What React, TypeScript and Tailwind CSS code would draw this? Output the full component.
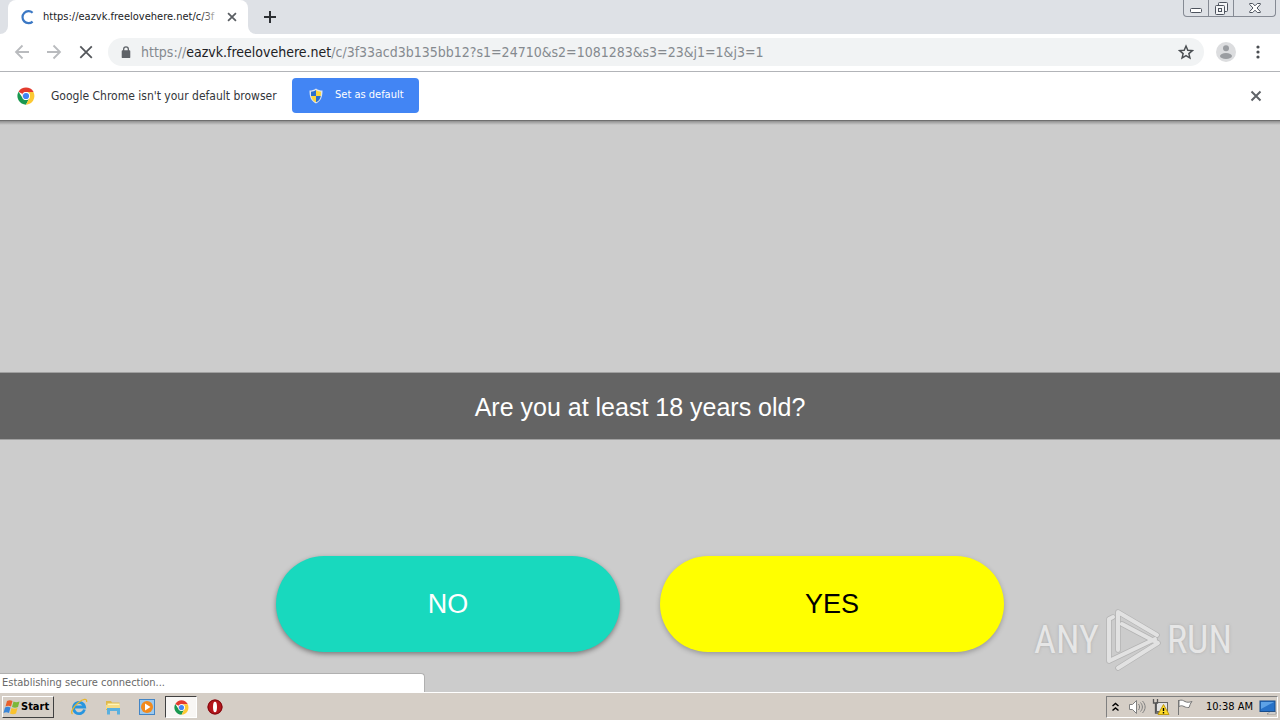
import type { ReactNode } from "react";

function ChromeLogo({ className }: { className: string }) {
  return (
    <svg className={className} viewBox="0 0 48 48" aria-hidden="true">
      <circle cx="24" cy="24" r="23" fill="#fff" />
      <path d="M24 24 4.1 12.5A23 23 0 0 1 43.9 12.5L44 13.5H24A10.5 10.5 0 0 0 14.9 29.2Z" fill="#e33b2e" />
      <path d="M4.1 12.5A23 23 0 0 0 24 47L33.1 29.3A10.5 10.5 0 0 1 14.9 29.2Z" fill="#1a9850" />
      <path d="M43.9 13.5A23 23 0 0 1 24 47L33.1 29.3A10.5 10.5 0 0 0 24 13.5Z" fill="#fcc934" />
      <circle cx="24" cy="24" r="10.5" fill="#fff" />
      <circle cx="24" cy="24" r="8.2" fill="#4285f4" />
    </svg>
  );
}

function Cross({ className }: { className: string }) {
  return (
    <svg className={className} viewBox="0 0 16 16" fill="none" stroke="currentColor" strokeWidth="2" aria-hidden="true">
      <path d="M3.5 3.5l9 9M12.5 3.5l-9 9" />
    </svg>
  );
}

function TabStrip() {
  return (
    <header className="flex h-[34px] items-start justify-between bg-[#dee1e6]">
      <div className="flex h-full items-center">
        <div className="h-full w-2 bg-white">
          <div className="h-full w-2 rounded-br-lg bg-[#dee1e6]" />
        </div>
        <div className="flex h-full w-60 items-center rounded-t-lg bg-white pl-3 pr-2">
          <svg className="size-4 shrink-0" viewBox="0 0 16 16" fill="none" stroke="#3b78c4" strokeWidth="2.2" aria-label="Loading">
            <path d="M12.6 3.8A6 6 0 1 0 12.6 12.6" />
          </svg>
          <div className="relative ml-[7px] w-[178px] whitespace-nowrap text-[11px] text-[#202124]">
            https://eazvk.freelovehere.net/c/3f
            <span className="absolute inset-y-0 right-0 w-5 bg-linear-to-r from-transparent to-white" />
          </div>
          <button type="button" aria-label="Close tab" className="ml-1 shrink-0 text-[#5a5e63]">
            <Cross className="size-[14px]" />
          </button>
        </div>
        <div className="h-full w-2 bg-white">
          <div className="h-full w-2 rounded-bl-lg bg-[#dee1e6]" />
        </div>
        <button type="button" aria-label="New tab" className="ml-1.5 text-[#2c2f33]">
          <svg className="size-4" viewBox="0 0 16 16" fill="none" stroke="currentColor" strokeWidth="2" aria-hidden="true">
            <path d="M8 2v12M2 8h12" />
          </svg>
        </button>
      </div>
      <div className="mr-[4px] flex h-[17px] rounded-b-[4px] border border-t-0 border-[#858a94] text-[#4d535e]">
        <button type="button" aria-label="Minimize" className="flex w-[25px] items-end justify-center border-r border-[#858a94] pb-[3px]">
          <svg className="h-[5px] w-3" viewBox="0 0 12 5" fill="#fff" stroke="currentColor" aria-hidden="true">
            <rect x=".5" y=".5" width="11" height="4" rx="1" />
          </svg>
        </button>
        <button type="button" aria-label="Restore" className="flex w-[25px] items-end justify-center border-r border-[#858a94] pb-[1px]">
          <svg className="size-[13px]" viewBox="0 0 13 13" fill="#f4f5f7" stroke="currentColor" aria-hidden="true">
            <rect x="3.5" y=".5" width="9" height="9" rx="1" />
            <rect x=".5" y="3.5" width="9" height="9" rx="1" />
            <rect x="3.5" y="6.5" width="3" height="3" />
          </svg>
        </button>
        <button type="button" aria-label="Close window" className="flex w-[41px] items-end justify-center pb-[3px]">
          <svg className="h-[10px] w-3" viewBox="0 0 12 10" fill="#fff" stroke="currentColor" aria-hidden="true">
            <path d="M.7.5h3L6 2.8 8.3.5h3v1L8 5l3.300 3.500v1h-3L6 7.200 3.700 9.500h-3v-1L4 5 .7 1.500z" />
          </svg>
        </button>
      </div>
    </header>
  );
}

function ArrowIcon({ children }: { children: ReactNode }) {
  return (
    <svg className="size-4" viewBox="0 0 16 16" fill="none" stroke="currentColor" strokeWidth="1.8" aria-hidden="true">
      {children}
    </svg>
  );
}

function Toolbar() {
  return (
    <nav className="flex h-[38px] items-center border-b border-[#b2b4b8] bg-white px-[14px] pb-0.5" aria-label="Browser toolbar">
      <div className="flex items-center gap-4">
        <button type="button" aria-label="Back" className="text-[#b9bbbe]">
          <ArrowIcon><path d="M15 8H2M8.5 1.5L2 8l6.500 6.500" /></ArrowIcon>
        </button>
        <button type="button" aria-label="Forward" className="text-[#b9bbbe]">
          <ArrowIcon><path d="M1 8h13M7.500 1.500L14 8l-6.500 6.500" /></ArrowIcon>
        </button>
        <button type="button" aria-label="Stop" className="text-[#54575b]">
          <ArrowIcon><path d="M2.300 2.300l11.500 11.500M13.800 2.300L2.300 13.800" /></ArrowIcon>
        </button>
      </div>
      <div className="ml-[14px] flex h-7 flex-1 items-center rounded-full bg-[#f1f3f4] pl-3 pr-2.5">
        <svg className="size-3" viewBox="0 0 12 14" fill="#5f6368" aria-hidden="true">
          <path fillRule="evenodd" d="M2.500 5V3.700a3.500 3.500 0 0 1 7 0V5H10a1 1 0 0 1 1 1v7a1 1 0 0 1-1 1H2a1 1 0 0 1-1-1V6a1 1 0 0 1 1-1zM4 5h4V3.700a2 2 0 0 0-4 0z" />
        </svg>
        <div className="ml-[9px] flex-1 whitespace-nowrap text-[14px] leading-5 text-[#858a8f]">
          https://<span className="text-[#202124]">eazvk.freelovehere.net</span>/c/3f33acd3b135bb12?s1=24710&amp;s2=1081283&amp;s3=23&amp;j1=1&amp;j3=1
        </div>
        <button type="button" aria-label="Bookmark this page">
          <svg className="size-4" viewBox="0 0 24 24" fill="none" stroke="#4a4e52" strokeWidth="2.200" aria-hidden="true">
            <path d="M12 3l2.700 6.300 6.800.600-5.200 4.500 1.600 6.700L12 17.500l-5.900 3.600 1.600-6.700L2.500 9.900l6.800-.600z" />
          </svg>
        </button>
      </div>
      <button type="button" aria-label="Profile" className="ml-3">
        <svg className="size-5" viewBox="0 0 20 20" aria-hidden="true">
          <circle cx="10" cy="10" r="10" fill="#dcdddf" />
          <circle cx="10" cy="6.200" r="3" fill="#9a9da1" />
          <ellipse cx="10" cy="14" rx="6" ry="3" fill="#9a9da1" />
        </svg>
      </button>
      <button type="button" aria-label="Menu" className="ml-[14px]">
        <svg className="size-4" viewBox="0 0 16 16" fill="#4a4e52" aria-hidden="true">
          <circle cx="8" cy="3" r="1.600" />
          <circle cx="8" cy="8" r="1.600" />
          <circle cx="8" cy="13" r="1.600" />
        </svg>
      </button>
    </nav>
  );
}

function InfoBar() {
  return (
    <section className="flex h-[48px] items-center bg-white pb-px pl-[17px] pr-4" aria-label="Default browser">
      <ChromeLogo className="size-[18px]" />
      <p className="ml-4 w-[229px] whitespace-nowrap text-[12px] text-[#33363a]">Google Chrome isn't your default browser</p>
      <button type="button" className="ml-3 flex h-[35px] w-[127px] items-center rounded-[4px] bg-[#4285f4] pl-4 text-[11px] text-white">
        <svg className="size-4" viewBox="0 0 16 16" aria-hidden="true">
          <path d="M8 .5C6 2 4 2.500 1.500 2.500 1.500 9 3 13 8 15.500 13 13 14.500 9 14.500 2.500 12 2.500 10 2 8 .5z" fill="#dfe5ee" />
          <path d="M8 2C6.500 3 5 3.600 3 3.700V8h5z" fill="#2a6fce" />
          <path d="M8 2c1.500 1 3 1.600 5 1.700 0 1.600 0 3-.3 4.300H8z" fill="#fbd63c" />
          <path d="M8 8H3.100c.5 3 2 4.900 4.900 6.300z" fill="#fbd63c" />
          <path d="M8 8h4.800c-.5 3-1.900 4.900-4.800 6.300z" fill="#2a6fce" />
        </svg>
        <span className="ml-[11px]">Set as default</span>
      </button>
      <button type="button" aria-label="Dismiss" className="ml-auto text-[#5f6368]">
        <Cross className="size-4" />
      </button>
    </section>
  );
}

function Watermark() {
  return (
    <div
      className="absolute bottom-5 right-12 flex items-center gap-[5px] font-['Roboto_Condensed','Liberation_Sans_Narrow','Roboto',sans-serif] text-[38px] leading-[64px] text-[#e6e6e6] text-shadow-[0_0_3px_#aaaaaa]"
      aria-label="ANY.RUN"
    >
      <span>ANY</span>
      <svg className="h-16 w-[58px]" viewBox="0 0 58 64" fill="none" strokeLinecap="round" strokeLinejoin="round" aria-hidden="true">
        <g stroke="#b4b4b4" strokeWidth="5.500">
          <path d="M9 9L5 11V53L51 31" />
          <path d="M14 42V4L53 27M14 60L54 35L18 16" />
        </g>
        <g stroke="#e2e2e2" strokeWidth="4">
          <path d="M9 9L5 11V53L51 31" />
          <path d="M14 42V4L53 27M14 60L54 35L18 16" />
        </g>
      </svg>
      <span>RUN</span>
    </div>
  );
}

function AgeGate() {
  return (
    <main className="relative flex flex-1 flex-col justify-end border-t border-[#6f6f6f] bg-[#cccccc] pb-10 font-['Liberation_Sans',Arial,sans-serif]">
      <div className="absolute inset-x-0 top-0 h-1 bg-linear-to-b from-black/30 to-transparent" />
      <h1 className="border-y border-[#a0a0a0] bg-[#646464] pb-[15px] pt-[17px] text-center text-[25px] leading-[34px] text-white">
        Are you at least 18 years old?
      </h1>
      <div className="mt-[116px] flex justify-center gap-10">
        <button type="button" className="h-24 w-[344px] rounded-full bg-[#18d9be] text-[27px] text-white shadow-[0_2px_5px_rgba(0,0,0,0.4)]">
          NO
        </button>
        <button type="button" className="h-24 w-[344px] rounded-full bg-[#ffff00] text-[27px] text-black shadow-[0_2px_5px_rgba(0,0,0,0.25)]">
          YES
        </button>
      </div>
      <Watermark />
      <div className="absolute bottom-0 left-0 h-[19px] w-[425px] rounded-tr-[4px] border-r border-t border-[#b0b0b0] bg-white pl-0.5 font-['DejaVu_Sans_Condensed','Noto_Sans',sans-serif] text-[11px] leading-[18px] text-[#696969]">
        Establishing secure connection...
      </div>
    </main>
  );
}

function Taskbar() {
  return (
    <footer className="flex h-7 items-center border-t border-white bg-[#d5cec6] pt-px text-[11px] text-black">
      <button type="button" className="ml-0.5 flex h-[22px] w-[52px] items-center border border-b-[#404040] border-l-white border-r-[#404040] border-t-white font-bold">
        <svg className="size-[18px] shrink-0" viewBox="0 0 18 18" aria-hidden="true">
          <path d="M4 3c2-1 3.500-1 5.500 0L8 8.500c-2-1-3.500-1-5.500 0z" fill="#e8602c" />
          <path d="M10.500 3.500c2 1 3.500 1 6 0L15 9c-2 1-4 1-6 0z" fill="#7cb83a" />
          <path d="M2 9.500c2-1 3.500-1 5.500 0L6 15c-2-1-3.500-1-5.500 0z" fill="#3a86d8" />
          <path d="M8.500 10c2 1 4 1 6 0L13 15.500c-2 1-4 1-6 0z" fill="#f9c22e" />
        </svg>
        Start
      </button>
      <div className="ml-2 flex h-[22px] items-center">
        <button type="button" aria-label="Internet Explorer" className="flex w-[34px] justify-center">
          <svg className="size-[18px]" viewBox="0 0 18 18" fill="none" aria-hidden="true">
            <path d="M14.500 11.500A5.600 5.600 0 1 1 14.600 9H4" stroke="#2795df" strokeWidth="2.800" />
            <path d="M2.500 16C0 14 4 8 8.500 4.500 13 1 17.500 0 16.500 4" stroke="#e8b62c" strokeWidth="1.300" />
          </svg>
        </button>
        <button type="button" aria-label="File Explorer" className="flex w-[34px] justify-center">
          <svg className="size-[18px]" viewBox="0 0 18 18" aria-hidden="true">
            <path d="M2 3h5l1 1.500h7.500V12H2z" fill="#e0b94a" />
            <path d="M3.500 5.500h12V8h-12z" fill="#fff4b8" />
            <path d="M2 7h14v4H2z" fill="#f6dc85" />
            <path d="M3 10h13v6.500h-3V13H6v3.500H3z" fill="#5ab0df" />
          </svg>
        </button>
        <button type="button" aria-label="Media Player" className="flex w-[34px] justify-center">
          <svg className="size-[18px]" viewBox="0 0 18 18" aria-hidden="true">
            <rect x="1.500" y="1.500" width="15" height="15" fill="#9cc9ee" stroke="#4385c5" />
            <circle cx="9" cy="9" r="6" fill="#f28a1c" />
            <path d="M7 5.500v7L12.500 9z" fill="#fff" />
          </svg>
        </button>
        <button type="button" aria-label="Google Chrome" className="ml-px flex h-[22px] w-[32px] items-center justify-center border border-b-white border-l-[#404040] border-r-white border-t-[#404040] bg-[#f8f6f4]">
          <ChromeLogo className="size-[15px]" />
        </button>
        <button type="button" aria-label="Opera" className="ml-px flex w-[34px] justify-center">
          <svg className="size-4" viewBox="0 0 16 16" aria-hidden="true">
            <circle cx="8" cy="8" r="7.500" fill="#b4151b" />
            <circle cx="8" cy="8" r="7" fill="none" stroke="#7d0a10" />
            <ellipse cx="8" cy="8" rx="2" ry="5.300" fill="#fff" />
          </svg>
        </button>
      </div>
      <div className="ml-auto mr-0.5 flex h-[22px] w-[172px] items-center border border-b-white border-l-[#808080] border-r-white border-t-[#808080] pl-[3px]">
        <button type="button" aria-label="Show hidden icons">
          <svg className="h-3 w-[11px]" viewBox="0 0 11 12" fill="none" stroke="#000" strokeWidth="1.500" aria-hidden="true">
            <path d="M2.500 5l3-2.500L8.500 5M2.500 9.500l3-2.500 3 2.500" />
          </svg>
        </button>
        <svg className="ml-[7px] size-[18px]" viewBox="0 0 18 18" fill="none" stroke="#808080" aria-label="Volume">
          <path d="M1.500 6.500h3l4-4v13l-4-4h-3z" fill="#fff" />
          <path d="M10.500 6c1.500 2 1.500 4 0 6M12.500 4.500c2.500 3 2.500 6 0 9M14.500 3c3.500 4 3.500 8 0 12" />
        </svg>
        <svg className="ml-[6px] size-[18px]" viewBox="0 0 18 18" aria-label="Network warning">
          <rect x="4.500" y="4.500" width="11" height="9" fill="#e4e4e4" stroke="#666" />
          <path d="M1.500 1v4h4V1M3.500 5v10h7" fill="none" stroke="#555" strokeWidth="1.300" />
          <path d="M11.500 6.500l5.500 10H6z" fill="#fddb28" stroke="#c09a10" />
          <path d="M11.500 10v3M11.500 14v1.500" stroke="#000" strokeWidth="1.400" />
        </svg>
        <svg className="ml-[6px] size-[18px]" viewBox="0 0 18 18" fill="#fff" stroke="#777" aria-label="Action center">
          <path d="M2.500 2v15M3 2.500c3-1 4 0 6 1s4 1 7 0c-2 2-2 4-3 6-2 0-3 0-5-1s-3-1-5 0z" />
        </svg>
        <time className="ml-[12px] w-[50px] whitespace-nowrap">10:38 AM</time>
        <svg className="ml-[3px] h-4 w-[18px]" viewBox="0 0 18 16" aria-label="Show desktop">
          <rect x="1" y="2" width="15" height="10.500" fill="#2772c8" stroke="#174c8c" />
          <path d="M2 3h13L2 10z" fill="#5da2e6" />
          <path d="M8 15l3-2h6v2z" fill="#f0f0f0" stroke="#666" strokeWidth=".5" />
        </svg>
      </div>
    </footer>
  );
}

export default function App() {
  return (
    <div className="flex min-h-screen flex-col font-['DejaVu_Sans_Condensed','Noto_Sans',sans-serif]">
      <TabStrip />
      <Toolbar />
      <InfoBar />
      <AgeGate />
      <Taskbar />
    </div>
  );
}
